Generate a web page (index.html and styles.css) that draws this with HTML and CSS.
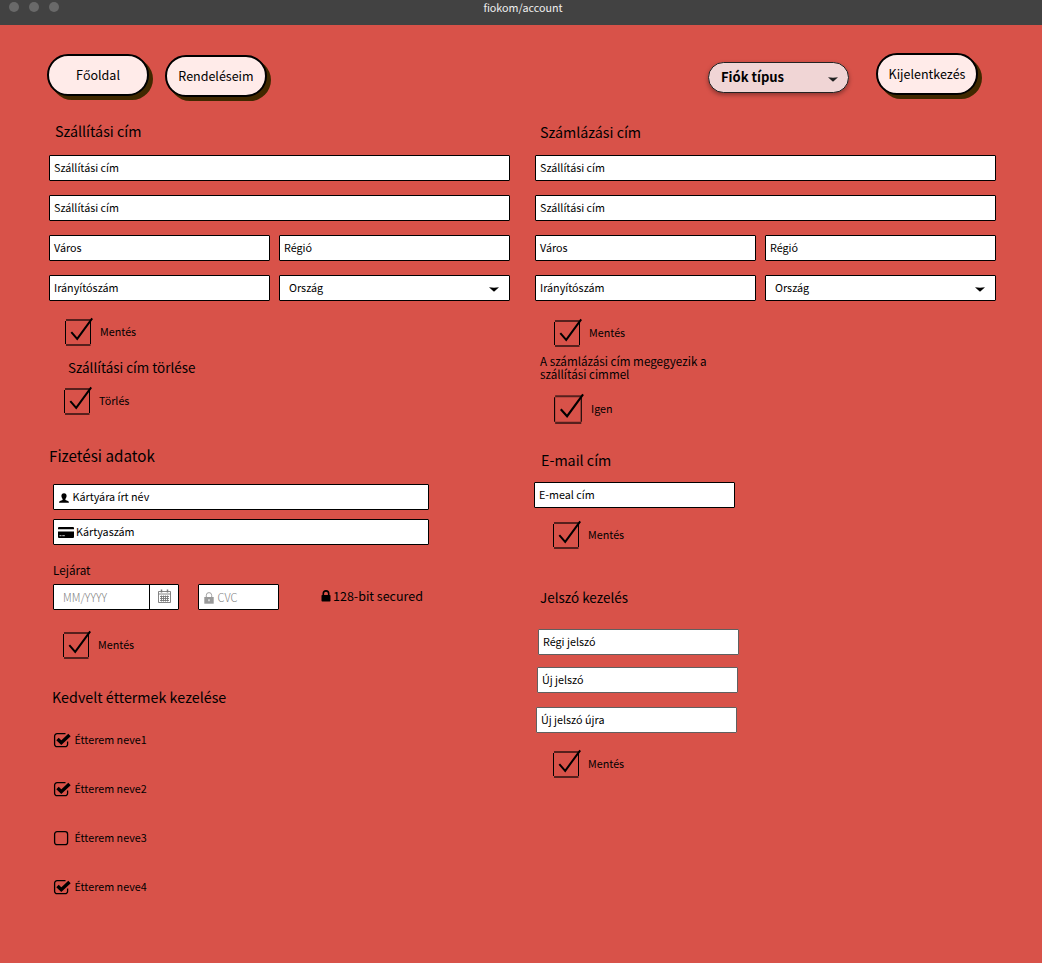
FILE: index.html
```html
<!DOCTYPE html>
<html lang="hu">
<head>
<meta charset="utf-8">
<title>fiokom/account</title>
<link rel="stylesheet" href="styles.css">
</head>
<body>
<svg class="defs" width="0" height="0">
  <symbol id="tick" viewBox="0 0 30 30">
    <path d="M2 3H26.500M2 28H26.500" stroke="#000" stroke-opacity=".6" stroke-width="2" fill="none"/>
    <path d="M1.500 4V27M26.500 4V27" stroke="#000" stroke-width="1" fill="none"/>
    <path d="M7.300 15.200L13.200 21.800L28.200 1.300" stroke="#000" stroke-width="2" fill="none"/>
  </symbol>
  <symbol id="box" viewBox="0 0 18 16">
    <rect x="1.600" y="1.700" width="13" height="13" rx="2.500" fill="none" stroke="#000" stroke-width="1.300"/>
  </symbol>
  <symbol id="boxon" viewBox="0 0 18 16">
    <path d="M12.500 1.700H4.100A2.500 2.500 0 0 0 1.600 4.200V12.200A2.500 2.500 0 0 0 4.100 14.700H12.100A2.500 2.500 0 0 0 14.600 12.200V9.500" fill="none" stroke="#000" stroke-width="1.300"/>
    <path d="M4.500 7L8.300 10.700L16.500 3" fill="none" stroke="#000" stroke-width="3.500"/>
  </symbol>
  <symbol id="caret" viewBox="0 0 10 5"><path d="M0 .3Q5 1.200 10 .3L5.600 4.300Q5 4.800 4.400 4.300Z"/></symbol>
  <symbol id="lock" viewBox="0 0 10 12">
    <path d="M2.300 6V3.600a2.700 2.700 0 0 1 5.400 0V6" fill="none" stroke="currentColor" stroke-width="1.600"/>
    <rect x=".5" y="5" width="9" height="6.500" rx=".8" fill="currentColor"/>
  </symbol>
</svg>
<div class="titlebar">
  <div class="dots"><i></i><i></i><i></i></div>
  <span>fiokom/account</span>
</div>
<header class="top">
  <a class="pill">Főoldal</a>
  <a class="pill orders">Rendeléseim</a>
  <div class="type">Fiók típus<svg class="caret"><use href="#caret"/></svg></div>
  <a class="pill logout">Kijelentkezés</a>
</header>
<main class="columns">
  <section class="col">
    <h2 class="ship">Szállítási cím</h2>
    <div class="address">
      <div class="field wide">Szállítási cím</div>
      <div class="field wide">Szállítási cím</div>
      <div class="field">Város</div><div class="field">Régió</div>
      <div class="field">Irányítószám</div><div class="field select">Ország<svg class="caret"><use href="#caret"/></svg></div>
    </div>
    <div class="check ship-save"><svg><use href="#tick"/></svg>Mentés</div>
    <h3 class="ship-del">Szállítási cím törlése</h3>
    <div class="check ship-del-ok"><svg><use href="#tick"/></svg>Törlés</div>
    <h2 class="pay">Fizetési adatok</h2>
    <div class="field card name">
      <svg class="user" viewBox="0 0 10 10"><path d="M5 .2C6.700 .2 7.700 1.400 7.600 3C7.500 4.600 6.800 5.300 6.400 5.900V6.900L9 8C9.700 8.300 9.900 9 9.900 9.800H.1C.1 9 .3 8.300 1 8L3.600 6.900V5.900C3.200 5.300 2.500 4.600 2.400 3C2.300 1.400 3.300 .2 5 .2Z"/></svg>Kártyára írt név
    </div>
    <div class="field card number">
      <svg class="cc" viewBox="0 0 16 11"><path d="M1 0H15Q16 0 16 1V2.300H0V1Q0 0 1 0ZM0 4.500H16V10Q16 11 15 11H1Q0 11 0 10Z"/><path d="M1.500 8.700H3.500M4.300 8.700H6.800" stroke="#fff" stroke-width=".8"/></svg>Kártyaszám
    </div>
    <div class="label">Lejárat</div>
    <div class="secure">
      <div class="field date"><span>MM/YYYY</span>
        <div class="cal"><svg viewBox="0 0 13 14"><path d="M.5 2.500H12.500V13.500H.5ZM.5 5H12.500M2 7.500H11M2 9.500H11M2 11.500H11M3.500 6.500V12.500M5.500 6.500V12.500M7.500 6.500V12.500M9.500 6.500V12.500" fill="none" stroke="#777" stroke-width=".9"/><path d="M3.500 .5V3.500M9.500 .5V3.500" stroke="#777" stroke-width="1.500"/></svg></div>
      </div>
      <div class="field cvc"><svg viewBox="0 0 10 12"><path d="M2.300 6V3.300a2.700 2.700 0 0 1 5.400 0V6" fill="none" stroke="#999" stroke-width=".9"/><rect x=".3" y="5" width="9.400" height="6.700" fill="#999"/><path d="M5 7.300V9.300" stroke="#fff" stroke-width="1.200"/></svg><span>CVC</span></div>
      <div class="bits"><svg><use href="#lock"/></svg>128-bit secured</div>
    </div>
    <div class="check pay-save"><svg><use href="#tick"/></svg>Mentés</div>
    <h2 class="fav">Kedvelt éttermek kezelése</h2>
    <div class="places">
      <div class="place"><svg><use href="#boxon"/></svg>Étterem neve1</div>
      <div class="place"><svg><use href="#boxon"/></svg>Étterem neve2</div>
      <div class="place"><svg><use href="#box"/></svg>Étterem neve3</div>
      <div class="place"><svg><use href="#boxon"/></svg>Étterem neve4</div>
    </div>
  </section>
  <section class="col">
    <h2 class="bill">Számlázási cím</h2>
    <div class="address">
      <div class="field wide">Szállítási cím</div>
      <div class="field wide">Szállítási cím</div>
      <div class="field">Város</div><div class="field">Régió</div>
      <div class="field">Irányítószám</div><div class="field select">Ország<svg class="caret"><use href="#caret"/></svg></div>
    </div>
    <div class="check bill-save"><svg><use href="#tick"/></svg>Mentés</div>
    <p class="same">A számlázási cím megegyezik a<br>szállítási cimmel</p>
    <div class="check same-ok"><svg><use href="#tick"/></svg>Igen</div>
    <h2 class="mail">E-mail cím</h2>
    <div class="field short email">E-meal cím</div>
    <div class="check mail-save"><svg><use href="#tick"/></svg>Mentés</div>
    <h3 class="pass">Jelszó kezelés</h3>
    <div class="field short old">Régi jelszó</div>
    <div class="field short new">Új jelszó</div>
    <div class="field short again">Új jelszó újra</div>
    <div class="check pass-save"><svg><use href="#tick"/></svg>Mentés</div>
  </section>
</main>
</body>
</html>
```
FILE: styles.css
```css
* { box-sizing: border-box; }
body {
  margin: 0;
  height: 963px;
  overflow: hidden;
  background: #d85249;
  color: #000;
  font: 10.75px/16px "Noto Sans CJK SC", "Open Sans", sans-serif;
  white-space: nowrap;
}
svg { display: block; flex: none; }
.defs { display: none; }
h2, h3, p { margin: 0; font-weight: 400; }
h2, h3 { height: 24px; line-height: 22px; }
h2 { font-size: 14.3px; }
h3 { font-size: 13.45px; }

.titlebar {
  display: grid;
  grid-template-columns: 1fr auto 1fr;
  height: 25px;
  background: #424242;
  color: #f0f0f0;
}
.titlebar span { padding-left: 4px; }
.dots { display: flex; gap: 10px; padding: 2px 0 0 9.4px; }
.dots i { width: 10px; height: 10px; border-radius: 50%; background: #696969; }

.top { display: flex; align-items: flex-start; height: 95px; padding: 29px 0 0 47px; }
.pill {
  width: 102px;
  height: 42px;
  border: 2px solid #000;
  border-radius: 21px;
  background: #ffebe9;
  box-shadow: 4px 4px 0 #402800;
  font-size: 12.5px;
  line-height: 38px;
  display: flex;
  justify-content: center;
}
.orders { margin: 1px 0 0 16px; }
.type {
  display: flex;
  align-items: center;
  justify-content: space-between;
  width: 141px;
  height: 31px;
  margin: 8px 0 0 441px;
  padding: 0 10px 2px 12px;
  border: 1px solid #222;
  border-radius: 16px;
  background: #f0d5d5;
  box-shadow: 0 2px 4px rgba(0, 0, 0, .35);
  font-size: 13px;
  font-weight: 700;
}
.logout { margin: -1px 0 0 27px; }
.caret { width: 10px; height: 5px; margin-top: 3px; }
.type .caret { margin-top: 6px; fill: #222; }

.columns { display: flex; gap: 25px; padding-left: 49px; }
.col { width: 461px; }
.ship { margin-left: 6px; }
.address {
  display: grid;
  grid-template-columns: 221px 231px;
  gap: 14px 9px;
  margin-top: 11px;
}
.wide { grid-column: span 2; }
.field {
  display: flex;
  align-items: center;
  height: 26px;
  padding: 0 4px;
  border: 1px solid #000;
  border-radius: 1px;
  background: #fff;
}
.select { justify-content: space-between; padding: 0 10px 0 9px; }

.check { display: flex; align-items: center; height: 30px; gap: 6px; }
.check svg { width: 30px; height: 30px; }
.ship-save { margin: 16px 0 0 15px; }
.ship-del { margin: 9px 0 0 19px; }
.ship-del-ok { margin: 6px 0 0 14px; }
.pay { margin-top: 28px; font-size: 15.2px; }
.card { width: 376px; margin-left: 4px; }
.name { margin-top: 16px; padding-left: 5px; gap: 3.5px; }
.user { width: 10px; height: 10px; margin-top: 1px; }
.number { margin-top: 9px; gap: 2px; }
.cc { width: 16px; height: 11px; margin-top: 1px; }
.label { height: 16px; margin: 18px 0 0 4px; font-size: 11.7px; line-height: 14px; }
.secure { display: flex; margin: 5px 0 0 4px; }
.date { width: 126px; padding: 0 0 0 9px; justify-content: space-between; }
.date span, .cvc span { padding-bottom: 1px; color: #808080; font-size: 11.1px; font-weight: 300; }
.cal { display: flex; justify-content: center; width: 29px; height: 24px; padding-top: 4px; border-left: 1px solid #000; }
.cal svg { width: 13px; height: 14px; }
.cvc { width: 81px; margin-left: 19px; padding-left: 5px; gap: 3.5px; }
.cvc svg { width: 10px; height: 12px; margin-top: 2px; }
.bits { display: flex; align-items: center; gap: 2px; height: 24px; margin-left: 42px; font-size: 12.5px; }
.bits svg { width: 10px; height: 12px; margin-top: -1px; }
.pay-save { margin: 20px 0 0 13px; }
.fav { margin: 26px 0 0 3px; }
.places { display: flex; flex-direction: column; gap: 33px; margin: 22px 0 0 4px; }
.place { display: flex; align-items: center; gap: 3.5px; height: 16px; }
.place svg { width: 18px; height: 16px; }

.bill { margin: 1px 0 0 5px; }
.bill + .address { margin-top: 10px; }
.bill-save { margin: 17px 0 0 18px; }
.same { margin: 6px 0 0 5px; font-size: 11.65px; line-height: 13px; }
.same-ok { height: 32px; margin: 13px 0 0 18px; }
.same-ok svg { width: 32px; height: 32px; }
.mail { margin: 24px 0 0 6px; }
.short { width: 201px; }
.email { margin: 9px 0 0 -1px; }
.mail-save { margin: 12px 0 0 17px; }
.pass { margin: 36px 0 0 5px; }
.old, .new, .again { border-color: #606060; }
.old { margin: 19px 0 0 3px; }
.new { margin: 12px 0 0 2px; }
.again { margin: 14px 0 0 1px; }
.pass-save { margin: 16px 0 0 17px; }
```
